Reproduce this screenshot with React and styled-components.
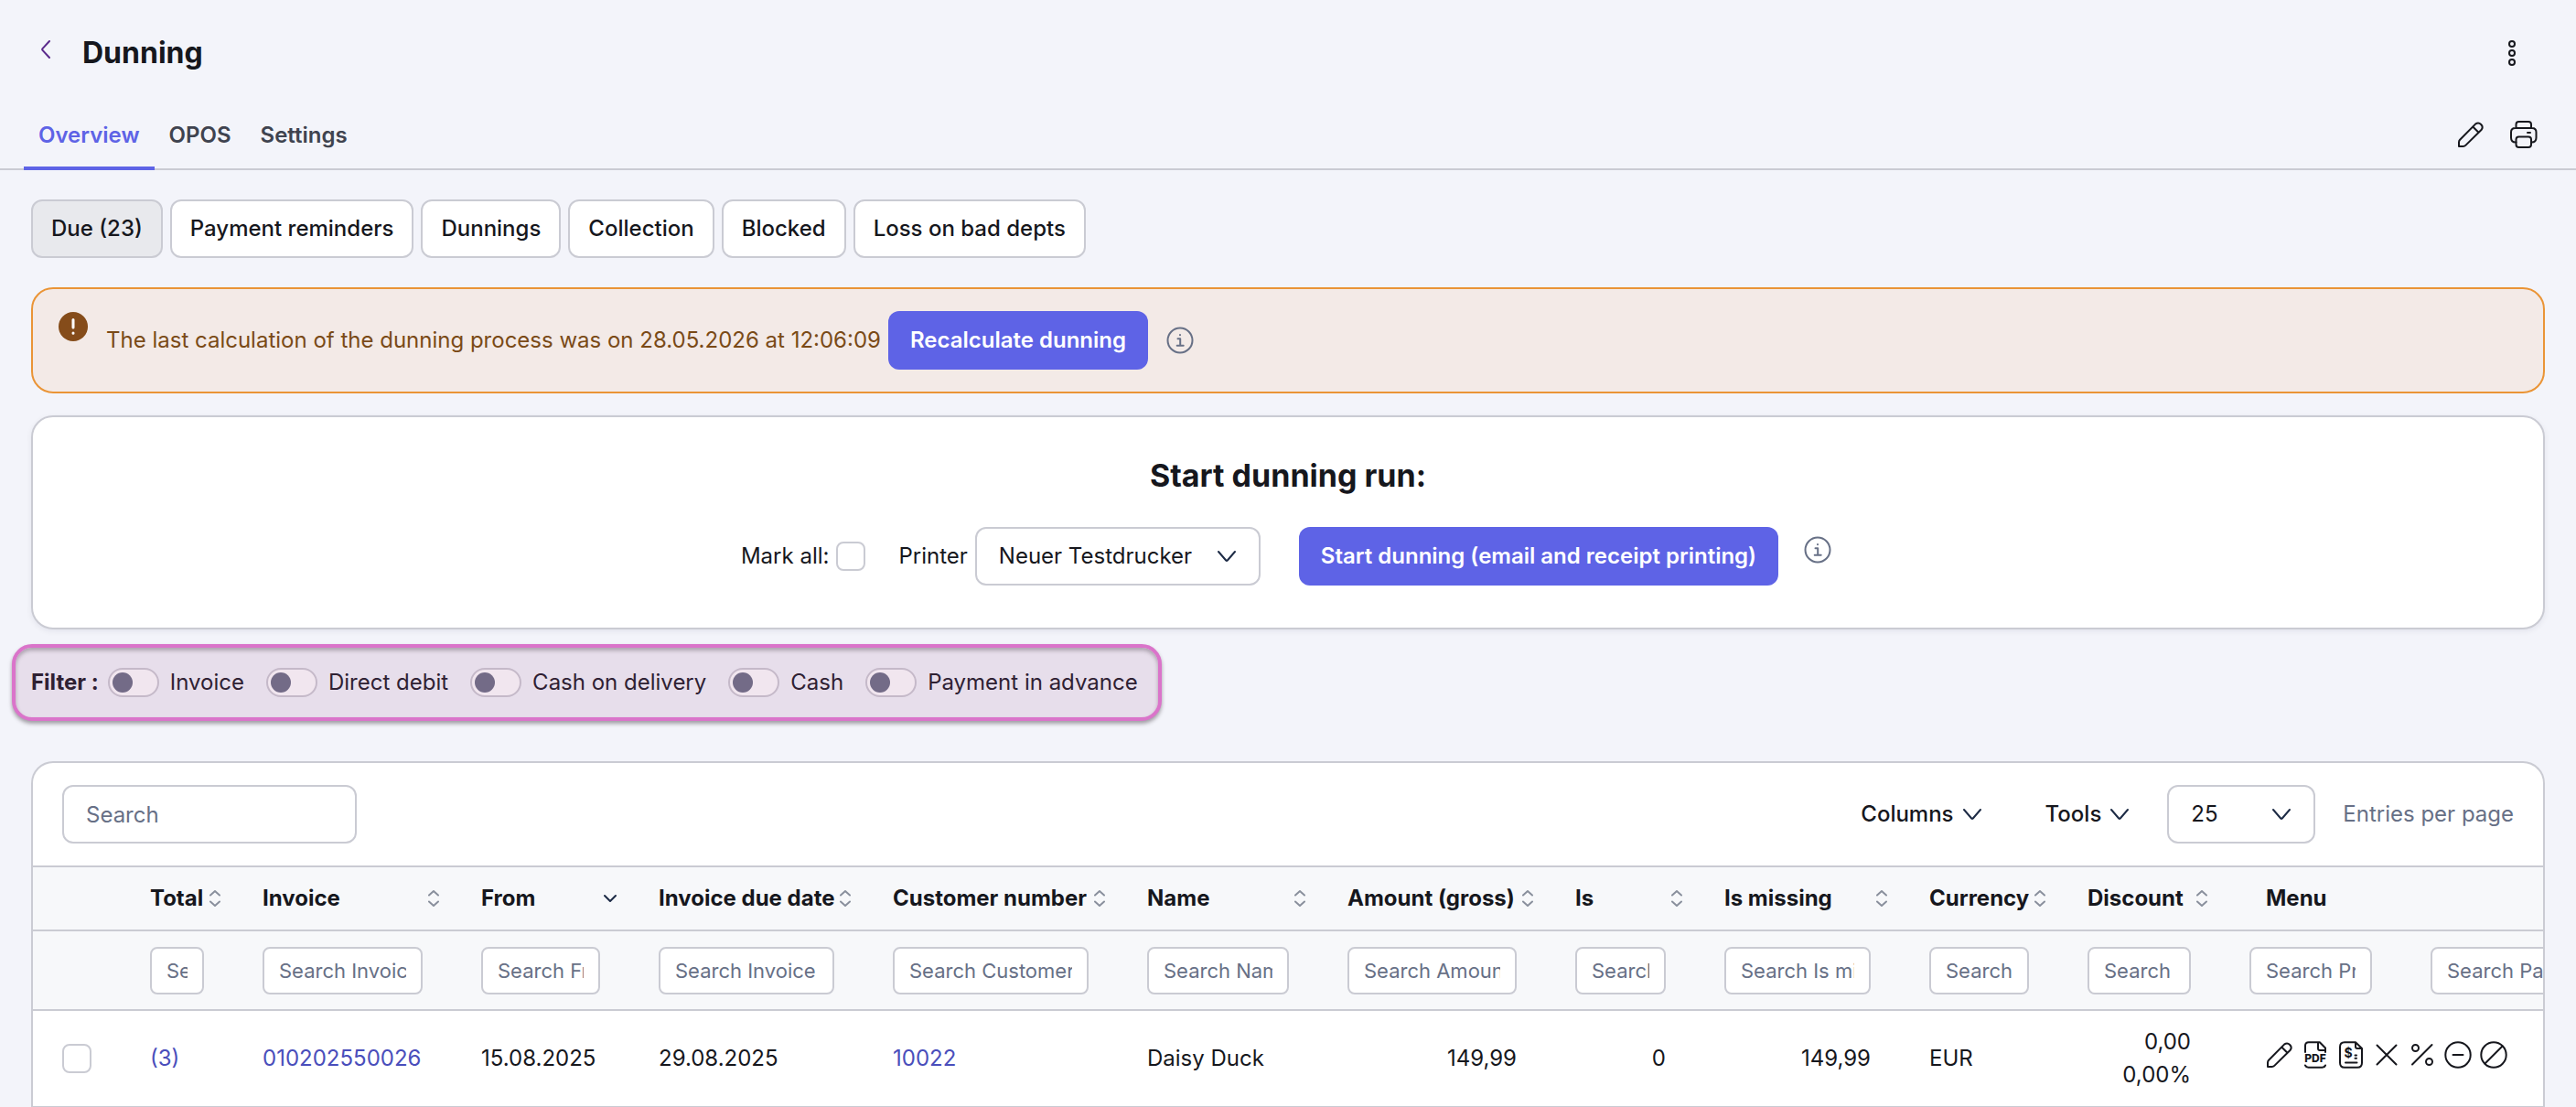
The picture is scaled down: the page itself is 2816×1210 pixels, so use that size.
import React from "react";
import styled, { createGlobalStyle } from "styled-components";

const color = {
  page: "#f3f4fa",
  surface: "#ffffff",
  subtle: "#f7f8fa",
  border: "#cacbd3",
  primary: "#5e63e6",
  link: "#4a4ebb",
  text: "#16171d",
  secondary: "#3f434f",
  muted: "#677086",
  icon: "#1d2b45"
};

const GlobalStyle = createGlobalStyle`
  *, *::before, *::after {
    box-sizing: border-box;
  }

  body {
    margin: 0;
    background: ${color.page};
    color: ${color.text};
    font: 400 24px/36px Inter, "Liberation Sans", sans-serif;
  }

  button, input, select {
    margin: 0;
    font: inherit;
    color: inherit;
  }

  svg {
    display: block;
    flex: none;
  }
`;

const Page = styled.div`
  height: 100vh;
  overflow: hidden;
`;

const TopBar = styled.header`
  display: flex;
  align-items: center;
  gap: 34px;
  padding: 38px 66px 34px 44px;
`;

const BackLink = styled.a`
  padding-bottom: 8px;
  color: #5b2a8c;
`;

const Title = styled.h1`
  flex: 1;
  margin: 0;
  font-size: 32px;
  font-weight: 700;
  line-height: 40px;
`;

const IconButton = styled.button`
  padding: 0;
  border: 0;
  background: none;
  cursor: pointer;
`;

const TabBar = styled.nav`
  display: flex;
  align-items: center;
  padding: 0 42px 0 26px;
  box-shadow: inset 0 -2px ${color.border};
`;

const Tab = styled.a`
  padding: 18px 16px 16px;
  border-bottom: 4px solid ${p => (p.$active ? color.primary : "transparent")};
  color: ${p => (p.$active ? color.primary : color.secondary)};
  font-weight: 600;
  line-height: 36px;
  text-decoration: none;
`;

const TabActions = styled.div`
  display: flex;
  gap: 28px;
  margin-left: auto;
  padding-bottom: 4px;
`;

const Content = styled.main`
  padding: 32px 34px 0;
`;

const StatusList = styled.div`
  display: flex;
  gap: 8px;
  margin-bottom: 32px;
`;

const StatusButton = styled.button`
  height: 64px;
  padding: 0 20px;
  border: 2px solid ${color.border};
  border-radius: 12px;
  background: ${p => (p.$active ? "#e8e9ed" : color.surface)};
  font-weight: 500;
  cursor: pointer;
`;

const Alert = styled.section`
  display: flex;
  align-items: center;
  padding: 24px 28px;
  border: 2px solid #ea9436;
  border-radius: 24px;
  background: #f3eae7;
  color: #7a4a17;
`;

const AlertIcon = styled.span`
  align-self: flex-start;
  margin-right: 18px;
`;

const PrimaryButton = styled.button`
  height: 64px;
  padding: 0 24px;
  border: 0;
  border-radius: 12px;
  background: ${color.primary};
  color: #fff;
  font-weight: 600;
  cursor: pointer;
`;

const AlertButton = styled(PrimaryButton)`
  margin: 0 20px 0 8px;
`;

const RunCard = styled.section`
  display: flex;
  flex-direction: column;
  align-items: center;
  gap: 36px;
  margin-top: 24px;
  padding: 44px 32px 46px;
  border: 2px solid ${color.border};
  border-radius: 24px;
  background: ${color.surface};
  box-shadow: 0 2px 6px rgba(20, 20, 50, 0.07);
`;

const RunTitle = styled.h2`
  margin: 0;
  font-size: 34px;
  font-weight: 700;
  line-height: 40px;
`;

const RunRow = styled.div`
  display: flex;
  align-items: center;
`;

const FieldLabel = styled.label`
  display: flex;
  align-items: center;
  gap: 8px;
`;

const PrinterField = styled(FieldLabel)`
  margin: 0 42px 0 36px;
`;

const RunInfo = styled.div`
  align-self: flex-start;
  padding: 10px 4px 0 28px;
`;

const Checkbox = styled.input`
  display: block;
  width: 32px;
  height: 32px;
  border: 2px solid ${color.border};
  border-radius: 8px;
  background: ${color.surface};
  appearance: none;
`;

// The chevron shares the grid cell of the select
const SelectBox = styled.span`
  display: grid;
  align-items: center;
  width: ${p => p.$width};

  > * {
    grid-area: 1 / 1;
  }

  > svg {
    justify-self: end;
    margin-right: 27px;
    pointer-events: none;
  }
`;

const Select = styled.select`
  width: 100%;
  height: 64px;
  padding: 0 24px;
  border: 2px solid ${color.border};
  border-radius: 12px;
  background: ${color.surface};
  appearance: none;
`;

const FilterBar = styled.section`
  display: flex;
  align-items: center;
  gap: 24px;
  width: fit-content;
  height: 84px;
  margin: 16px 0 44px -21px;
  padding: 0 22px 0 17px;
  border: 4px solid #da74ca;
  border-radius: 22px;
  background: #e7deeb;
  color: #2f2133;
  box-shadow: 0 3px 4px rgba(60, 50, 60, 0.45),
    inset 0 3px 4px rgba(60, 50, 60, 0.35);
`;

const FilterTitle = styled.strong`
  margin-right: -14px;
  font-weight: 700;
`;

const FilterOption = styled.label`
  display: flex;
  align-items: center;
  gap: 12px;
`;

const Toggle = styled.input`
  display: flex;
  align-items: center;
  width: 56px;
  height: 32px;
  padding: 0 3px;
  border: 2px solid #c5b9c9;
  border-radius: 16px;
  background: #f1e6ef;
  appearance: none;

  &::before {
    content: "";
    width: 22px;
    height: 22px;
    border-radius: 50%;
    background: #736b87;
  }

  &:checked {
    justify-content: flex-end;
  }
`;

const TableCard = styled.section`
  overflow: hidden;
  border: 2px solid ${color.border};
  border-bottom: 0;
  border-radius: 24px 24px 0 0;
  background: ${color.surface};
`;

const Toolbar = styled.div`
  display: flex;
  align-items: center;
  padding: 24px 32px;
`;

const SearchInput = styled.input`
  width: 322px;
  height: 64px;
  margin-right: auto;
  padding: 0 24px;
  border: 2px solid ${color.border};
  border-radius: 12px;
  background: ${color.surface};

  &::placeholder {
    color: ${color.muted};
  }
`;

const MenuButton = styled.button`
  display: flex;
  align-items: center;
  gap: 10px;
  margin-right: ${p => p.$space};
  padding: 0;
  border: 0;
  background: none;
  font-weight: 500;
  cursor: pointer;
`;

const PageSize = styled.label`
  display: flex;
  flex-direction: row-reverse;
  align-items: center;
  gap: 30px;
  color: ${color.muted};

  select {
    color: ${color.text};
  }
`;

const Table = styled.table`
  width: 100%;
  table-layout: fixed;
  border-collapse: collapse;
`;

const HeadRow = styled.tr`
  height: ${p => p.$height};
  border-top: 2px solid ${color.border};
  background: ${color.subtle};
`;

const BodyRow = styled.tr`
  height: 106px;
  border-top: 2px solid ${color.border};
  border-bottom: 2px solid ${color.border};
`;

const HeadCell = styled.th`
  padding: 0 14px 0 32px;
  font-weight: 700;
  text-align: left;
  white-space: nowrap;
`;

const MenuHeadCell = styled(HeadCell)`
  padding-left: 50px;
`;

const HeadContent = styled.div`
  display: flex;
  align-items: center;
  justify-content: space-between;
`;

const Cell = styled.td`
  padding: 0 32px;
  text-align: ${p => p.$align || "left"};
`;

const MenuCell = styled(Cell)`
  padding-left: 50px;
`;

const ColumnInput = styled.input`
  display: block;
  width: 100%;
  height: 52px;
  padding: 0 16px;
  border: 2px solid ${color.border};
  border-radius: 8px;
  background: ${color.surface};
  font-size: 22px;

  &::placeholder {
    color: ${color.muted};
  }
`;

const CellLink = styled.a`
  color: ${color.link};
  text-decoration: none;
`;

const Actions = styled.div`
  display: flex;
  gap: 9px;
  padding-bottom: 8px;
`;

const Icon = ({ width = 30, height = 30, children, ...rest }) => (
  <svg
    width={width}
    height={height}
    viewBox={`0 0 ${width} ${height}`}
    fill="none"
    stroke="currentColor"
    strokeWidth="2"
    strokeLinecap="round"
    strokeLinejoin="round"
    aria-hidden="true"
    {...rest}
  >
    {children}
  </svg>
);

const BackIcon = () => (
  <Icon width={12} height={20}>
    <path d="M10 1 2.5 9.2q-.7.8 0 1.6L10 19" />
  </Icon>
);

const MoreIcon = () => (
  <Icon width={8} height={28}>
    <circle cx="4" cy="4" r="3" />
    <circle cx="4" cy="14" r="3" />
    <circle cx="4" cy="24" r="3" />
  </Icon>
);

const PencilIcon = () => (
  <Icon>
    <path d="M2 28v-4.6q0-1.6 1.1-2.7L20.3 3.4a4.6 4.6 0 0 1 6.4 6.4L9.3 26.9Q8.2 28 6.6 28zM17.200 6.500l6.300 6.300" />
  </Icon>
);

const PrinterIcon = () => (
  <Icon>
    <path d="M6.500 8V4q0-3 3-3h10.500q3 0 3 3v4M6.500 23.500H6q-5 0-5-5v-6q0-4.500 4.500-4.500h18.500q4.500 0 4.500 4.500v6q0 5-5 5H23M19 13h3" />
    <rect x="6.500" y="17.500" width="16.500" height="11.500" rx="3" />
  </Icon>
);

const InfoIcon = () => (
  <Icon stroke={color.muted}>
    <circle cx="15" cy="15" r="13.500" />
    <path d="M12.500 13.200h2.700v7.300M11.700 20.800h7M15 9v.200" />
  </Icon>
);

const WarningIcon = () => (
  <Icon width={34} height={34} stroke="#fff" strokeWidth="3">
    <circle cx="16" cy="17" r="16" fill="#854c1a" stroke="none" />
    <path d="M16 9.500v8.500M16 24v.200" />
  </Icon>
);

const ChevronIcon = () => (
  <Icon width={20} height={14} stroke={color.icon}>
    <path d="m1 2 8.200 9.500q.8.8 1.600 0L19 2" />
  </Icon>
);

const SortIcon = () => (
  <Icon width={12} height={18} stroke="#8a909d">
    <path d="m1 5.500 5-4.500 5 4.500M1 12.500l5 4.500 5-4.500" />
  </Icon>
);

const SortedIcon = () => (
  <Icon width={14} height={10} stroke={color.icon}>
    <path d="m1 2 6 6 6-6" />
  </Icon>
);

const PdfIcon = () => (
  <Icon>
    <path d="M4 12V5q0-3.800 3.800-3.800h12L26 7.500V12M18 2v6q0 2 2 2h5.500M4 26.500q1 2.200 3.500 2.200h15q2.500 0 3.500-2.200" />
    <text x="15" y="23" textAnchor="middle" fontSize="12" fontWeight="800" fill="currentColor" stroke="none">
      PDF
    </text>
  </Icon>
);

const InvoiceIcon = () => (
  <Icon>
    <path d="M20 1.200H8q-5 0-5 5v17.600q0 5 5 5h14q5 0 5-5V8zM20 1.800V6q0 2 2 2h4.500M19.500 15.500h1.500M19.500 18.800h1.500M9 23.500h12.500" />
    <text x="12" y="18" textAnchor="middle" fontSize="14" fontWeight="700" fill="currentColor" stroke="none">
      $
    </text>
  </Icon>
);

const CrossIcon = () => (
  <Icon>
    <path d="m4.500 4.500 21 21M25.500 4.500l-21 21" />
  </Icon>
);

const PercentIcon = () => (
  <Icon>
    <path d="m4 25.500 21.500-21.500" />
    <circle cx="7.500" cy="7.500" r="3.500" />
    <circle cx="22.500" cy="22.500" r="3.500" />
  </Icon>
);

const MinusIcon = () => (
  <Icon>
    <circle cx="15" cy="15" r="13.700" />
    <path d="M9.500 15h11" />
  </Icon>
);

const BlockIcon = () => (
  <Icon>
    <circle cx="15" cy="15" r="13.700" />
    <path d="M5.500 24.500l19-19" />
  </Icon>
);

const tabs = ["Overview", "OPOS", "Settings"];

const statuses = [
  "Due (23)",
  "Payment reminders",
  "Dunnings",
  "Collection",
  "Blocked",
  "Loss on bad depts"
];

const filters = [
  "Invoice",
  "Direct debit",
  "Cash on delivery",
  "Cash",
  "Payment in advance"
];

const columns = [
  { name: "Total", width: 123 },
  { name: "Invoice", width: 239 },
  { name: "From", width: 194, sorted: true },
  { name: "Invoice due date", width: 256 },
  { name: "Customer number", width: 278 },
  { name: "Name", width: 219 },
  { name: "Amount (gross)", width: 249 },
  { name: "Is", width: 163 },
  { name: "Is missing", width: 224 },
  { name: "Currency", width: 173 },
  { name: "Discount", width: 177 }
];

// Only their search fields are visible, the menu covers the rest
const coveredColumns = [
  { name: "Process", width: 198 },
  { name: "Payment method", width: 260 }
];

const actions = [
  { name: "Edit", icon: <PencilIcon /> },
  { name: "Open PDF", icon: <PdfIcon /> },
  { name: "Show invoice", icon: <InvoiceIcon /> },
  { name: "Remove", icon: <CrossIcon /> },
  { name: "Discount", icon: <PercentIcon /> },
  { name: "Write off", icon: <MinusIcon /> },
  { name: "Block", icon: <BlockIcon /> }
];

const rows = [
  {
    total: "(3)",
    invoice: "010202550026",
    from: "15.08.2025",
    due: "29.08.2025",
    customer: "10022",
    name: "Daisy Duck",
    amount: "149,99",
    is: "0",
    missing: "149,99",
    currency: "EUR",
    discount: "0,00",
    discountRate: "0,00%"
  }
];

const Row = ({ row }) => (
  <BodyRow>
    <Cell>
      <Checkbox type="checkbox" aria-label={`Select ${row.invoice}`} />
    </Cell>
    <Cell>
      <CellLink href="#total">{row.total}</CellLink>
    </Cell>
    <Cell>
      <CellLink href="#invoice">{row.invoice}</CellLink>
    </Cell>
    <Cell>{row.from}</Cell>
    <Cell>{row.due}</Cell>
    <Cell>
      <CellLink href="#customer">{row.customer}</CellLink>
    </Cell>
    <Cell>{row.name}</Cell>
    <Cell $align="right">{row.amount}</Cell>
    <Cell $align="right">{row.is}</Cell>
    <Cell $align="right">{row.missing}</Cell>
    <Cell>{row.currency}</Cell>
    <Cell $align="right">
      {row.discount}
      <br />
      {row.discountRate}
    </Cell>
    <MenuCell colSpan={2}>
      <Actions>
        {actions.map(action => (
          <IconButton key={action.name} aria-label={action.name}>
            {action.icon}
          </IconButton>
        ))}
      </Actions>
    </MenuCell>
  </BodyRow>
);

export default () => (
  <Page>
    <GlobalStyle />
    <TopBar>
      <BackLink href="#back" aria-label="Back">
        <BackIcon />
      </BackLink>
      <Title>Dunning</Title>
      <IconButton aria-label="More">
        <MoreIcon />
      </IconButton>
    </TopBar>
    <TabBar>
      {tabs.map((tab, i) => (
        <Tab key={tab} href={`#${tab.toLowerCase()}`} $active={i === 0}>
          {tab}
        </Tab>
      ))}
      <TabActions>
        <IconButton aria-label="Edit">
          <PencilIcon />
        </IconButton>
        <IconButton aria-label="Print">
          <PrinterIcon />
        </IconButton>
      </TabActions>
    </TabBar>
    <Content>
      <StatusList>
        {statuses.map((status, i) => (
          <StatusButton key={status} $active={i === 0}>
            {status}
          </StatusButton>
        ))}
      </StatusList>
      <Alert>
        <AlertIcon>
          <WarningIcon />
        </AlertIcon>
        The last calculation of the dunning process was on 28.05.2026 at
        12:06:09
        <AlertButton>Recalculate dunning</AlertButton>
        <InfoIcon />
      </Alert>
      <RunCard>
        <RunTitle>Start dunning run:</RunTitle>
        <RunRow>
          <FieldLabel>
            Mark all:
            <Checkbox type="checkbox" />
          </FieldLabel>
          <PrinterField>
            Printer
            <SelectBox $width="312px">
              <Select>
                <option>Neuer Testdrucker</option>
              </Select>
              <ChevronIcon />
            </SelectBox>
          </PrinterField>
          <PrimaryButton>
            Start dunning (email and receipt printing)
          </PrimaryButton>
          <RunInfo>
            <InfoIcon />
          </RunInfo>
        </RunRow>
      </RunCard>
      <FilterBar>
        <FilterTitle>Filter :</FilterTitle>
        {filters.map(filter => (
          <FilterOption key={filter}>
            <Toggle type="checkbox" role="switch" />
            {filter}
          </FilterOption>
        ))}
      </FilterBar>
      <TableCard>
        <Toolbar>
          <SearchInput type="text" placeholder="Search" aria-label="Search" />
          <MenuButton $space="70px">
            Columns
            <ChevronIcon />
          </MenuButton>
          <MenuButton $space="42px">
            Tools
            <ChevronIcon />
          </MenuButton>
          <PageSize>
            Entries per page
            <SelectBox $width="162px">
              <Select>
                <option>25</option>
              </Select>
              <ChevronIcon />
            </SelectBox>
          </PageSize>
        </Toolbar>
        <Table>
          <colgroup>
            <col width="96" />
            {[...columns, ...coveredColumns].map(column => (
              <col key={column.name} width={column.width} />
            ))}
          </colgroup>
          <thead>
            <HeadRow $height="70px">
              <HeadCell />
              {columns.map(column => (
                <HeadCell key={column.name}>
                  <HeadContent>
                    {column.name}
                    {column.sorted ? <SortedIcon /> : <SortIcon />}
                  </HeadContent>
                </HeadCell>
              ))}
              <MenuHeadCell colSpan={2}>Menu</MenuHeadCell>
            </HeadRow>
            <HeadRow $height="87px">
              <Cell />
              {[...columns, ...coveredColumns].map(column => (
                <Cell key={column.name}>
                  <ColumnInput
                    type="text"
                    placeholder={`Search ${column.name}`}
                    aria-label={`Search ${column.name}`}
                  />
                </Cell>
              ))}
            </HeadRow>
          </thead>
          <tbody>
            {rows.map(row => (
              <Row key={row.invoice} row={row} />
            ))}
          </tbody>
        </Table>
      </TableCard>
    </Content>
  </Page>
);
